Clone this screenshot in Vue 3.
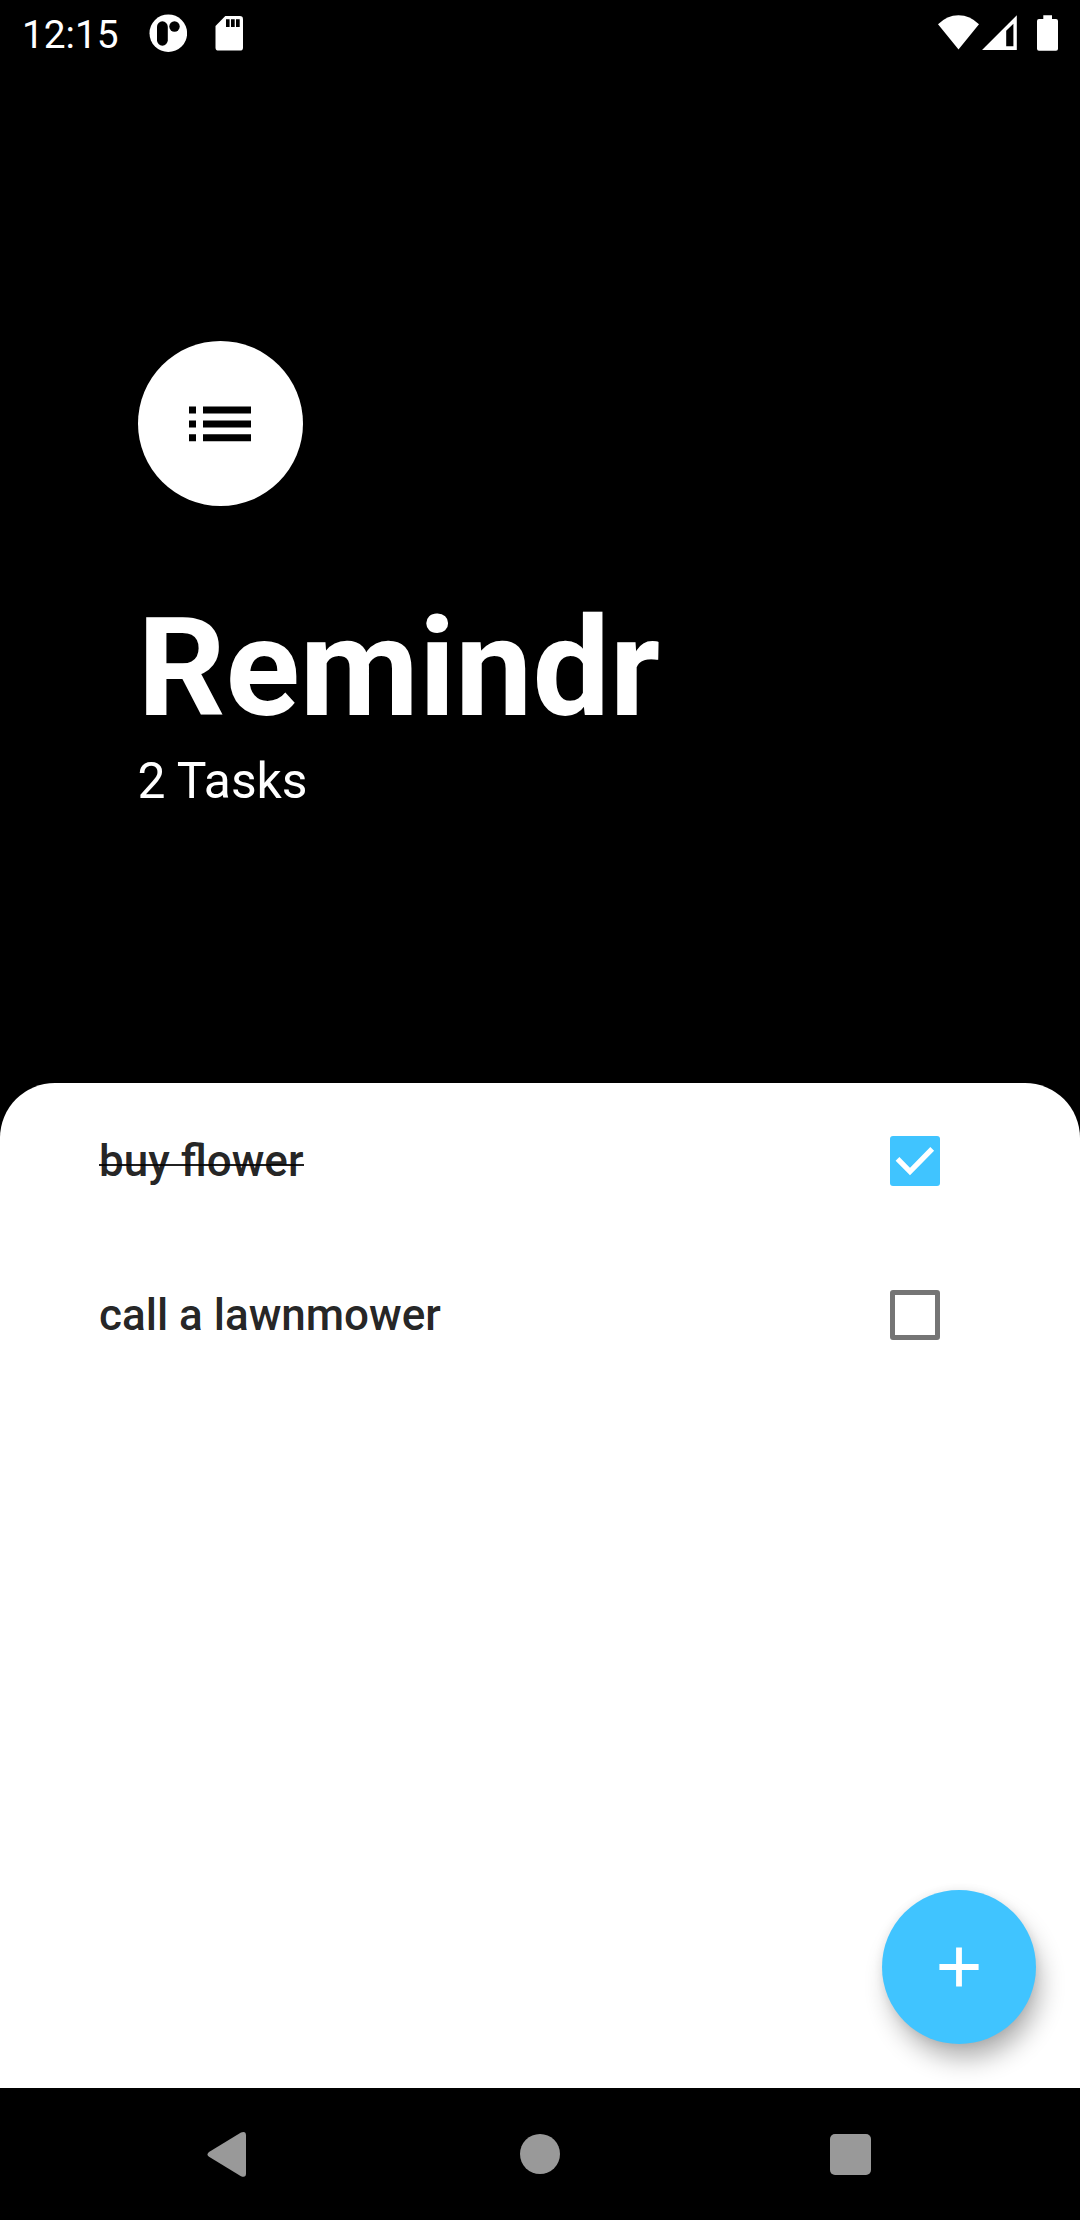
<script setup>
import { ref, computed } from 'vue'

const tasks = ref([
  { id: 1, name: 'buy flower', done: true },
  { id: 2, name: 'call a lawnmower', done: false },
])
const taskCount = computed(() => `${tasks.value.length} Tasks`)
const toggle = (task) => {
  task.done = !task.done
}
</script>

<template>
  <div class="screen">
    <div class="status-bar">
      <span class="clock">12:15</span>
      <svg class="notification" width="38" height="38" viewBox="149 14 38 38">
        <circle cx="168.3" cy="33.2" r="18.8" fill="#fff" />
        <rect x="157" y="21.3" width="10.8" height="24.4" rx="5.4" fill="#000" />
        <circle cx="174.5" cy="26.5" r="5.2" fill="#000" />
      </svg>
      <svg class="sd-card" width="28" height="36" viewBox="215 15 28 36">
        <path
          fill="#fff"
          d="M225.3 16H239.8Q243 16 243 19.2V47.4Q243 50.6 239.8 50.6H218.7Q215.5 50.6 215.5 47.4V26Z"
        />
        <path fill="#000" d="M226 19.3h3.6v7.7H226zM231 19.3h3.7v7.7H231zM236 19.3h3.7v7.7H236z" />
      </svg>
      <div class="spacer"></div>
      <svg width="42" height="36" viewBox="938 15 42 36">
        <path fill="#fff" d="M938 24.3Q947 15.2 958.5 15.2T979 24.3L958.5 49.5Z" />
      </svg>
      <svg class="signal" width="36" height="36" viewBox="982 15 36 36">
        <path
          fill="#fff"
          fill-rule="evenodd"
          d="M982 50L1016.8 15.2V50ZM1006.2 30.7V46.3H1013.4V23.7Z"
        />
      </svg>
      <svg class="battery" width="22" height="36" viewBox="1037 15 22 36">
        <path
          fill="#fff"
          d="M1043.3 15.3H1052V19H1056Q1058 19 1058 21V48.7Q1058 50.7 1056 50.7H1039Q1037 50.7 1037 48.7V21Q1037 19 1039 19H1043.3Z"
        />
      </svg>
    </div>

    <header class="header">
      <div class="avatar">
        <svg width="62" height="36" viewBox="0 0 62 36">
          <path d="M0 .6h7v7H0zM14 .6h48v7H14zM0 14.5h7v7H0zM14 14.5h48v7H14zM0 28.3h7v7H0zM14 28.3h48v7H14z" />
        </svg>
      </div>
      <h1 class="title">Remindr</h1>
      <p class="count">{{ taskCount }}</p>
    </header>

    <main class="panel">
      <ul class="tasks">
        <li v-for="task in tasks" :key="task.id" class="task" @click="toggle(task)">
          <span class="name" :class="{ done: task.done }">{{ task.name }}</span>
          <span class="checkbox" :class="{ checked: task.done }">
            <svg v-if="task.done" width="50" height="50" viewBox="0 0 50 50">
              <path d="M7.5 22.8L20 35.5L42.2 12.8" fill="none" stroke="#fff" stroke-width="5.3" />
            </svg>
          </span>
        </li>
      </ul>
      <button class="fab" aria-label="Add task">
        <svg width="40" height="40" viewBox="0 0 40 40">
          <path d="M17.1 .4h5.8v16.7h16.7v5.8H22.9v16.7h-5.8V22.9H.4v-5.8h16.7z" fill="#fff" />
        </svg>
      </button>
    </main>

    <nav class="nav-bar">
      <span class="nav-slot">
        <svg width="46" height="48" viewBox="206 2130 46 48">
          <path
            fill="#999"
            d="M208 2152L240 2132.6Q245 2130.8 245 2135.5V2173.5Q245 2178 240 2176.2L208 2156.8Q205 2154.4 208 2152Z"
          />
        </svg>
      </span>
      <span class="nav-slot"><span class="home"></span></span>
      <span class="nav-slot"><span class="recents"></span></span>
    </nav>
  </div>
</template>

<style>
body {
  margin: 0;
  background: #000;
}
</style>

<style scoped>
.screen {
  display: flex;
  flex-direction: column;
  width: 1080px;
  height: 2220px;
  overflow: hidden;
  background: #000;
  color: #fff;
  font-family: Roboto, 'Liberation Sans', sans-serif;
}
svg {
  display: block;
  flex: none;
}
.status-bar {
  display: flex;
  align-items: center;
  box-sizing: border-box;
  height: 66px;
  padding: 0 21px 0 22px;
}
.clock {
  width: 127px;
  font-size: 38.8px;
  line-height: 46px;
  padding-top: 3px;
}
.sd-card {
  margin-left: 28px;
}
.spacer {
  flex: 1;
}
.signal {
  margin-left: 2px;
}
.battery {
  margin-left: 19px;
}
.header {
  box-sizing: border-box;
  height: 1017.4px;
  padding: 275px 82.5px 0 137.5px;
}
.avatar {
  display: flex;
  align-items: center;
  justify-content: center;
  width: 165px;
  height: 165px;
  border-radius: 50%;
  background: #fff;
}
.title {
  margin: 81.5px 0 0;
  font-size: 137.5px;
  font-weight: 700;
  line-height: 161px;
}
.count {
  margin: 3px 0 0;
  font-size: 49.8px;
  line-height: 58px;
}
.panel {
  position: relative;
  flex: 1;
  border-radius: 55px 55px 0 0;
  background: #fff;
  overflow: hidden;
}
.tasks {
  margin: 0;
  padding: 0;
  list-style: none;
}
.task {
  display: flex;
  align-items: center;
  justify-content: space-between;
  height: 154px;
  padding: 0 140px 0 99px;
}
.name {
  position: relative;
  padding-top: 2px;
  color: rgba(0, 0, 0, 0.87);
  font-size: 44px;
  font-weight: 500;
  line-height: 52px;
}
/* Strike line sits slightly below the font's own line-through position */
.name.done::after {
  content: '';
  position: absolute;
  left: 0;
  right: 0;
  bottom: 21px;
  height: 2px;
  background: rgba(0, 0, 0, 0.87);
}
.checkbox {
  box-sizing: border-box;
  width: 50px;
  height: 50px;
  margin-top: 1px;
  border: 5.5px solid #757575;
  border-radius: 3px;
}
.checkbox.checked {
  border: 0;
  background: #40c4ff;
}
.fab {
  position: absolute;
  right: 44px;
  bottom: 44px;
  display: flex;
  align-items: center;
  justify-content: center;
  width: 154px;
  height: 154px;
  padding: 0;
  border: 0;
  border-radius: 50%;
  background: #40c4ff;
  box-shadow: 6px 17px 26px -3px rgba(0, 0, 0, 0.32), 0 0 10px rgba(0, 0, 0, 0.08);
}
.nav-bar {
  display: flex;
  justify-content: center;
  height: 132px;
}
.nav-slot {
  display: flex;
  align-items: center;
  justify-content: center;
  width: 310.5px;
}
.home {
  width: 40px;
  height: 40px;
  border-radius: 50%;
  background: #999;
}
.recents {
  width: 41px;
  height: 41px;
  border-radius: 5px;
  background: #999;
}
</style>
